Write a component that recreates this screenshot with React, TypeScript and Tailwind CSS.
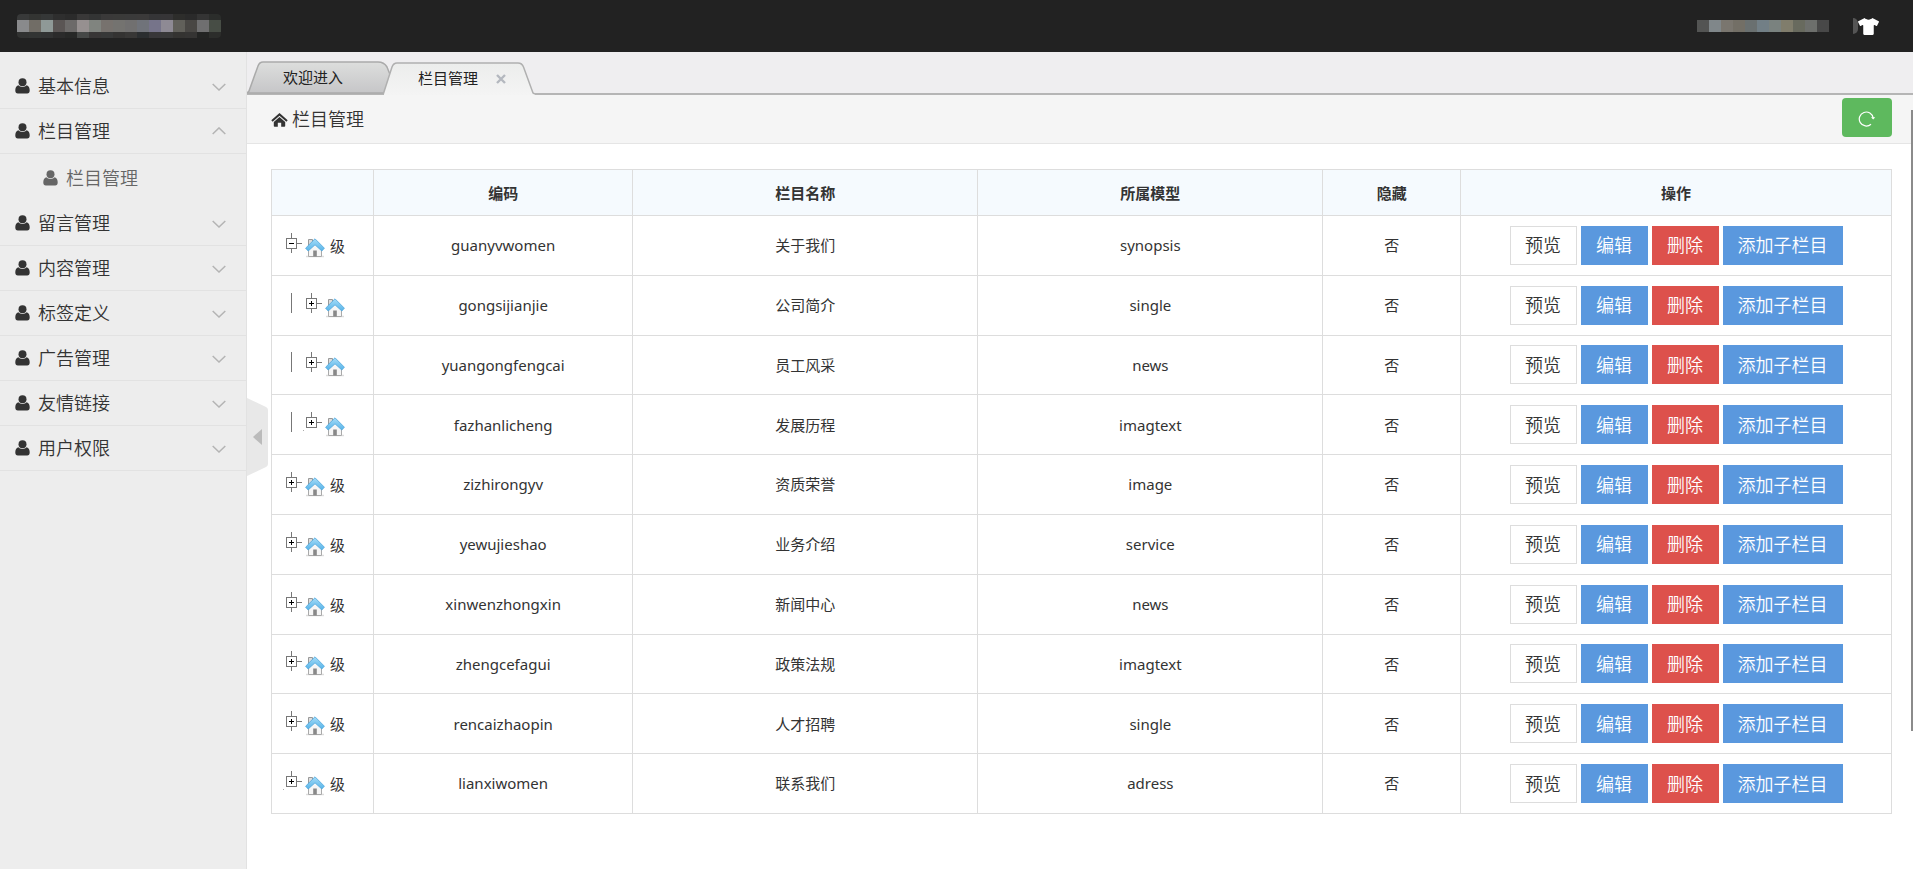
import { useState } from 'react';
import { FaTshirt } from 'react-icons/fa';

const MENU = [
  { label: '基本信息' },
  { label: '栏目管理', children: ['栏目管理'] },
  { label: '留言管理' },
  { label: '内容管理' },
  { label: '标签定义' },
  { label: '广告管理' },
  { label: '友情链接' },
  { label: '用户权限' },
];

const COLUMNS = [
  { title: '', width: 'w-[6.3%]' },
  { title: '编码', width: 'w-[16%]' },
  { title: '栏目名称', width: 'w-[21.3%]' },
  { title: '所属模型', width: 'w-[21.3%]' },
  { title: '隐藏', width: 'w-[8.5%]' },
  { title: '操作', width: 'w-[26.6%]' },
];

type Row = {
  code: string;
  name: string;
  model: string;
  child?: boolean;
  open?: boolean;
  last?: boolean;
};

const ROWS: Row[] = [
  { code: 'guanyvwomen', name: '关于我们', model: 'synopsis', open: true },
  { code: 'gongsijianjie', name: '公司简介', model: 'single', child: true },
  { code: 'yuangongfengcai', name: '员工风采', model: 'news', child: true },
  { code: 'fazhanlicheng', name: '发展历程', model: 'imagtext', child: true, last: true },
  { code: 'zizhirongyv', name: '资质荣誉', model: 'image' },
  { code: 'yewujieshao', name: '业务介绍', model: 'service' },
  { code: 'xinwenzhongxin', name: '新闻中心', model: 'news' },
  { code: 'zhengcefagui', name: '政策法规', model: 'imagtext' },
  { code: 'rencaizhaopin', name: '人才招聘', model: 'single' },
  { code: 'lianxiwomen', name: '联系我们', model: 'adress', last: true },
];

// masked site name, three rows of blocks
const SITE_MASK = [
  ['#383939', '#333432', '#353737', '#2e2e2e', '#2b2b2b', '#393838', '#333434', '#3a3939', '#3a3a39', '#3a3a3a', '#3b3a3a', '#353537', '#363537', '#2d2d2b', '#2a2a2a', '#343434', '#2b2d2b'],
  ['#898a8c', '#716d66', '#8f9997', '#5a5554', '#6c6a69', '#969090', '#80847f', '#77726e', '#747370', '#717070', '#70737a', '#76748a', '#8e8a94', '#61605a', '#494744', '#6f6f70', '#474d45'],
  ['#313231', '#323433', '#313232', '#2b2b2b', '#272827', '#464847', '#383636', '#373838', '#343332', '#383736', '#2b2e30', '#383739', '#383838', '#343331', '#353433', '#232423', '#2c2d2b'],
];
const USER_MASK = ['#535453', '#80878a', '#7a766f', '#736f66', '#6a7070', '#727f86', '#7a827f', '#807d6c', '#686a5e', '#6d6f6c', '#484848'];

function UserIcon() {
  return (
    <svg width="15" height="16" viewBox="0 0 15 16" fill="currentColor" aria-hidden="true">
      <circle cx="7.5" cy="4.2" r="4" />
      <path d="M3.4 7.2C1 7.8.3 10 .3 12.6c0 2 .9 2.9 2.5 2.9h9.4c1.600 0 2.500-.9 2.500-2.900 0-2.600-.7-4.800-3.100-5.400-1 1.100-2.400 1.700-4.100 1.700s-3.100-.6-4.100-1.700z" />
    </svg>
  );
}

function HomeIcon() {
  return (
    <svg className="mt-px" width="17" height="14" viewBox="0 0 17 14" fill="#333" aria-hidden="true">
      <path d="M8.500 0 .3 7.200l1.300 1.600 6.900-6 6.900 6 1.300-1.600z" />
      <path d="M8.500 4 2.800 8.900V13c0 .5.300.8.800.8h3.200V9.800h3.400v4h3.200c.5 0 .8-.3.8-.8V8.900z" />
    </svg>
  );
}

function Chevron({ up }: { up?: boolean }) {
  return (
    <svg width="14" height="9" viewBox="0 0 14 9" fill="none" stroke="#b4b4b4" strokeWidth="1.500" aria-hidden="true">
      <path d={up ? 'M.7 7 7 .9 13.300 7' : 'M.7 2 7 8 13.300 2'} />
    </svg>
  );
}

function TreeNode({ open, last }: { open?: boolean; last?: boolean }) {
  return (
    <svg className="mb-[5px]" width="20" height="20" viewBox="0 0 20 20" shapeRendering="crispEdges" aria-hidden="true">
      <path d="M9 0h1v5h-1z" fill="#777" />
      {last ? <path d="M1 18h1v1h-1z" fill="#aaa" /> : <path d="M9 16h1v4h-1z" fill="#777" />}
      <path d="M15 10h5v1h-5z" fill="#777" />
      <rect x="4.500" y="5.500" width="10" height="10" fill="#fff" stroke="#777" />
      <path d="M7 10h5v1h-5z" fill="#000" />
      {!open && <path d="M9 8h1v5h-1z" fill="#000" />}
      <path d="M8 10h3v1H8z" fill="#000" />
    </svg>
  );
}

function TreeLine() {
  return (
    <svg className="mb-[5px]" width="20" height="20" viewBox="0 0 20 20" shapeRendering="crispEdges" aria-hidden="true">
      <path d="M9 0h1v20h-1z" fill="#777" />
    </svg>
  );
}

function HouseIcon() {
  return (
    <svg className="ml-[3px]" width="20" height="20" viewBox="0 0 20 20" aria-hidden="true">
      <defs>
        <linearGradient id="roof" x1="0" y1="0" x2="0" y2="1">
          <stop offset="0" stopColor="#a5dcf8" />
          <stop offset="1" stopColor="#58b4e8" />
        </linearGradient>
      </defs>
      <path d="M1 18.500h18" stroke="#ddd" strokeWidth="1.500" />
      <path d="M3.500 1.500h4v6h-4z" fill="#ddd" stroke="#999" />
      <path d="M3.500 10.500 10 4.500l6.500 6v8h-13z" fill="#f6f6f6" stroke="#aaa" />
      <path d="M8.200 12.500h3.600v6H8.200z" fill="#888" />
      <path d="M10 .8.6 10.200 3.200 13 10 6.800l6.800 6.200 2.600-2.800z" fill="url(#roof)" stroke="#4da6dc" strokeWidth=".8" strokeLinejoin="round" />
    </svg>
  );
}

function TabShape({ active }: { active?: boolean }) {
  return active ? (
    <svg className="absolute inset-0" width="152" height="33" viewBox="0 0 152 33" aria-hidden="true">
      <defs>
        <linearGradient id="tabOn" x1="0" y1="0" x2="0" y2="1">
          <stop offset="0" stopColor="#ecedec" />
          <stop offset="1" stopColor="#f4f4f4" />
        </linearGradient>
      </defs>
      <path d="M0 33 9 5q1.500-4 5-4h121q4 0 5.500 4l9.500 26 2 1v1z" fill="url(#tabOn)" />
      <path d="M0 33 9 5q1.500-4 5-4h121q4 0 5.500 4l9.500 26 2 1" fill="none" stroke="#b0b0b0" strokeWidth="1.500" />
    </svg>
  ) : (
    <svg className="absolute inset-0" width="146" height="33" viewBox="0 0 146 33" aria-hidden="true">
      <defs>
        <linearGradient id="tabOff" x1="0" y1="0" x2="0" y2="1">
          <stop offset="0" stopColor="#dddedd" />
          <stop offset="1" stopColor="#c6c6c8" />
        </linearGradient>
      </defs>
      <path d="M0 32 2 30 11 5q1.500-4 5-4h115q6 0 9 5l4 10-6 16z" fill="url(#tabOff)" />
      <path d="M0 32 2 30 11 5q1.500-4 5-4h115q6 0 9 5l4 10M0 32h138" fill="none" stroke="#aaa" strokeWidth="1.500" />
    </svg>
  );
}

export default function App() {
  const [opened, setOpened] = useState('栏目管理');
  const [collapsed, setCollapsed] = useState(false);

  return (
    <div className="flex min-h-screen flex-col bg-white font-['Noto_Sans','Noto_Sans_CJK_SC',sans-serif] text-[15px] text-[#333]">
      <header className="flex h-[52px] items-center justify-between bg-[#222] pl-[17px] pr-[34px]">
        <div className="overflow-hidden rounded">
          {SITE_MASK.map((line, i) => (
            <div key={i} className="flex">
              {line.map((c, j) => (
                <span key={j} className={i === 1 ? 'h-3 w-3' : 'h-[6px] w-3'} style={{ background: c }} />
              ))}
            </div>
          ))}
        </div>
        <div className="flex items-center">
          <div className="flex">
            {USER_MASK.map((c, i) => (
              <span key={i} className="h-3 w-3" style={{ background: c }} />
            ))}
          </div>
          <span className="ml-6 h-4 w-[5px] rounded-r-full bg-[#555]" />
          <button type="button" aria-label="换肤" className="text-white">
            <FaTshirt size={21} />
          </button>
        </div>
      </header>

      <div className="flex flex-1">
        {!collapsed && (
          <nav className="w-[247px] shrink-0 border-r border-[#e2e2e2] bg-[#ededed] pt-3 text-lg font-[350]">
            {MENU.map((m) => (
              <div key={m.label}>
                <button
                  type="button"
                  onClick={() => setOpened(opened === m.label ? '' : m.label)}
                  className="flex h-[45px] w-full items-center border-b border-[#e2e2e2] pl-[15px] pr-5"
                >
                  <UserIcon />
                  <span className="ml-2 flex-1 text-left">{m.label}</span>
                  <Chevron up={opened === m.label} />
                </button>
                {opened === m.label && m.children?.map((c) => (
                  <a key={c} href="#" className="flex h-[47px] items-center pl-[43px] text-[#666]">
                    <UserIcon />
                    <span className="ml-2">{c}</span>
                  </a>
                ))}
              </div>
            ))}
          </nav>
        )}

        <main className="relative min-w-0 flex-1">
          <div className="flex h-[43px] items-end border-b-2 border-[#b5b5b5] bg-[#efeef0] text-[#222]">
            <button type="button" className="relative -mb-px h-[33px] w-[144px] pl-9 text-left">
              <TabShape />
              <span className="relative">欢迎进入</span>
            </button>
            <div className="relative -mb-[2px] -ml-2 flex h-[33px] w-[152px] items-center pl-[35px]">
              <TabShape active />
              <button type="button" className="relative">栏目管理</button>
              <button type="button" aria-label="关闭" className="relative ml-[18px]">
                <svg width="10" height="10" viewBox="0 0 10 10" stroke="#b4b8bf" strokeWidth="2.400" aria-hidden="true">
                  <path d="M1 1l8 8M9 1 1 9" />
                </svg>
              </button>
            </div>
          </div>

          <div className="flex h-[49px] items-center justify-between border-b border-[#e5e5e5] bg-[#f5f5f5] pl-6 pr-[21px]">
            <div className="flex items-center text-lg font-[350]">
              <HomeIcon />
              <span className="ml-1">栏目管理</span>
            </div>
            <button type="button" aria-label="刷新" className="mb-1 flex h-[39px] w-[50px] items-center justify-center rounded bg-[#5eb95e]">
              <svg className="mt-1" width="18" height="16" viewBox="0 0 18 16" fill="none" stroke="#fff" strokeWidth="1.200" aria-hidden="true">
                <path d="M15.200 7A7 7 0 1 0 13 13.200" />
                <path d="M13 6.200h4.200l-2 2.400z" fill="#fff" stroke="none" />
              </svg>
            </button>
          </div>

          <div className="pb-14 pl-6 pr-[21px] pt-[25px]">
            <table className="h-[645px] w-full table-fixed border-collapse">
              <thead>
                <tr className="h-[46px] bg-[#f5fafe]">
                  {COLUMNS.map((c) => (
                    <th key={c.title} className={`${c.width} border border-[#ddd] pt-px font-bold`}>{c.title}</th>
                  ))}
                </tr>
              </thead>
              <tbody>
                {ROWS.map((r) => (
                  <tr key={r.code} className="text-center">
                    <td className="border border-[#ddd] pl-[10px]">
                      <div className="flex items-end">
                        {r.child && <TreeLine />}
                        <TreeNode open={r.open} last={r.last} />
                        <HouseIcon />
                        {!r.child && <span className="ml-[5px] leading-6">级</span>}
                      </div>
                    </td>
                    <td className="border border-[#ddd]">{r.code}</td>
                    <td className="border border-[#ddd]">{r.name}</td>
                    <td className="border border-[#ddd]">{r.model}</td>
                    <td className="border border-[#ddd]">否</td>
                    <td className="border border-[#ddd]">
                      <div className="flex justify-center gap-1 text-lg font-[350] text-white">
                        <button type="button" className="h-[39px] w-[67px] border border-[#ddd] bg-white text-[#333]">预览</button>
                        <button type="button" className="h-[39px] w-[67px] bg-[#5a98de]">编辑</button>
                        <button type="button" className="h-[39px] w-[67px] bg-[#dd514c]">删除</button>
                        <button type="button" className="h-[39px] bg-[#5a98de] px-[15px]">添加子栏目</button>
                      </div>
                    </td>
                  </tr>
                ))}
              </tbody>
            </table>
          </div>

          {/* sidebar toggle */}
          <button
            type="button"
            aria-label="收起菜单"
            onClick={() => setCollapsed(!collapsed)}
            className="absolute left-0 top-[346px]"
          >
            <svg width="21" height="78" viewBox="0 0 21 78" aria-hidden="true">
              <path d="M0 0 19 9q2 1 2 3v54q0 2-2 3L0 78z" fill="#e8e8e8" />
              <path d="M6 39 15 31v16z" fill="#bbb" />
            </svg>
          </button>
          {/* scroll thumb */}
          <div className="absolute right-0 top-[58px] h-[621px] w-[2px] bg-[#8b8b8b]" />
        </main>
      </div>
    </div>
  );
}
